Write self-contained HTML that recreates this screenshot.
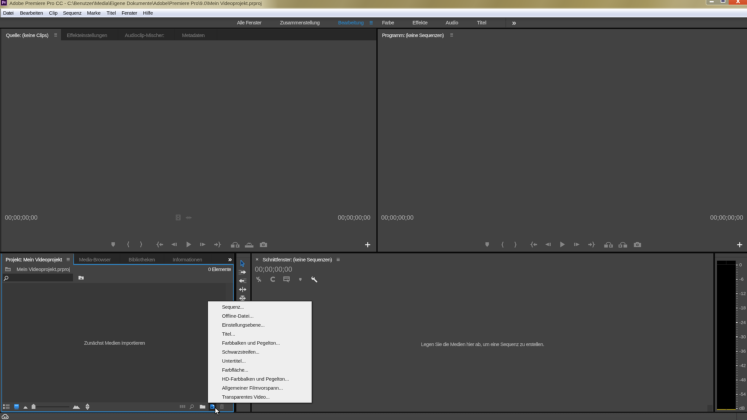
<!DOCTYPE html>
<html lang="de"><head><meta charset="utf-8"><title>Adobe Premiere Pro CC</title>
<style>
html,body{margin:0;padding:0;background:#424242;overflow:hidden;width:747px;height:420px}
#app{position:absolute;left:0;top:0;width:2261px;height:1280px;transform:scale(0.333333);transform-origin:0 0;will-change:transform;background:#424242;font-family:"Liberation Sans",sans-serif;}
#app div,#app span,#app svg{position:absolute;display:block}

.t{white-space:nowrap;-webkit-text-stroke:0.3px currentColor}
.ns{-webkit-text-stroke:0}
#in{left:-20px;top:-20px;width:2301px;height:1320px;overflow:hidden;background:#424242;filter:blur(0.85px);}
#c{left:20px;top:20px;width:2241px;height:1260px}
#vp{position:absolute;left:0;top:0;width:747px;height:420px;overflow:hidden;background:#424242}
</style></head><body><div id="vp"><div id="app"><div id="in"><div id="c">
<div style="left:-18.0px;top:-18.0px;width:2277.0px;height:44.1px;background:linear-gradient(90deg,#a79c6c 0%,#a4986a 30%,#9d9060 40%,#998a58 55%,#9c8c56 68%,#a3935a 80%,#a6975f 86%,#b4a778 91%,#b7ab7e 100%);"></div>
<div style="left:-18.0px;top:-18.0px;width:2277.0px;height:44.1px;background:repeating-linear-gradient(115deg,rgba(255,255,255,0) 0px,rgba(255,255,255,.05) 60px,rgba(0,0,0,.03) 120px,rgba(255,255,255,0) 180px);"></div>
<div style="left:6.0px;top:-18.0px;width:828.0px;height:43.2px;background:linear-gradient(90deg,rgba(234,229,200,0) 0%,rgba(234,229,200,.6) 3%,rgba(236,231,204,.66) 50%,rgba(234,229,200,.58) 94%,rgba(234,229,200,0) 100%);"></div>
<div style="left:-18.0px;top:22.2px;width:2277.0px;height:4.2px;background:linear-gradient(180deg,rgba(225,222,195,.0),rgba(232,231,218,.5));"></div>
<div style="left:2.1px;top:-18.0px;width:18.9px;height:35.4px;background:#2c0c3c;border:1px solid #b070c4;box-sizing:border-box;"></div>
<span class="t " style="left:5.4px;top:1.0px;font-size:12.26px;line-height:14.71px;color:#e2aaf2;font-weight:bold;letter-spacing:-0.32px;">Pr</span>
<span class="t ns" style="left:28.2px;top:0.8px;font-size:15.17px;line-height:18.21px;color:#47422f;letter-spacing:-0.13px;">Adobe Premiere Pro CC - C:\Benutzer\Media\Eigene Dokumente\Adobe\Premiere Pro\9.0\Mein Videoprojekt.prproj</span>
<div style="left:2116.8px;top:-18.0px;width:142.2px;height:33.9px;background:rgba(226,222,196,.55);border-radius:0 0 0 5px;"></div>
<div style="left:2118.6px;top:-18.0px;width:67.2px;height:31.5px;background:linear-gradient(180deg,#a5a186,#98947a);border-radius:0 0 0 4px;"></div>
<div style="left:2185.8px;top:-18.0px;width:73.2px;height:31.5px;background:linear-gradient(180deg,#e0704a,#d24c24);"></div>
<div style="left:2128.8px;top:3.0px;width:12.0px;height:3.6px;background:#f4f4f4;"></div>
<div style="left:2162.4px;top:-18.0px;width:13.2px;height:26.4px;background:#5a587a;border:2.7px solid #f0f0f0;border-top:0;box-sizing:border-box;border-radius:0 0 2px 2px;"></div>
<span class="t " style="left:2208.6px;top:-10.2px;font-size:20.50px;line-height:24.60px;color:#fff;font-weight:bold;">x</span>
<div style="left:-18.0px;top:26.1px;width:2277.0px;height:26.4px;background:linear-gradient(180deg,#ffffff 0%,#f6f8fc 18%,#e0e5f3 42%,#d5dbed 62%,#d6dcee 82%,#e6e9f4 100%);"></div>
<div style="left:-18.0px;top:26.1px;width:20.7px;height:26.4px;background:#8c8c8c;"></div>
<span class="t ns" style="left:9.3px;top:31.1px;font-size:14.71px;line-height:17.65px;color:#000;letter-spacing:-0.69px;">Datei</span>
<span class="t ns" style="left:60.0px;top:31.1px;font-size:14.71px;line-height:17.65px;color:#000;letter-spacing:-0.21px;">Bearbeiten</span>
<span class="t ns" style="left:147.0px;top:31.1px;font-size:14.71px;line-height:17.65px;color:#000;letter-spacing:0.12px;">Clip</span>
<span class="t ns" style="left:189.0px;top:31.1px;font-size:14.71px;line-height:17.65px;color:#000;letter-spacing:-0.36px;">Sequenz</span>
<span class="t ns" style="left:261.0px;top:31.1px;font-size:14.71px;line-height:17.65px;color:#000;letter-spacing:-0.01px;">Marke</span>
<span class="t ns" style="left:319.8px;top:31.1px;font-size:14.71px;line-height:17.65px;color:#000;letter-spacing:0.19px;">Titel</span>
<span class="t ns" style="left:364.8px;top:31.1px;font-size:14.71px;line-height:17.65px;color:#000;letter-spacing:-0.52px;">Fenster</span>
<span class="t ns" style="left:429.0px;top:31.1px;font-size:14.71px;line-height:17.65px;color:#000;letter-spacing:0.12px;">Hilfe</span>
<div style="left:-18.0px;top:52.5px;width:2277.0px;height:30.3px;background:linear-gradient(180deg,#383838,#434343 40%,#434343);"></div>
<div style="left:-18.0px;top:82.8px;width:2277.0px;height:3.9px;background:#0b0b0b;"></div>
<span class="t " style="left:711.0px;top:59.3px;font-size:15.17px;line-height:18.21px;color:#c2c2c2;letter-spacing:-0.67px;">Alle Fenster</span>
<span class="t " style="left:840.0px;top:59.3px;font-size:15.17px;line-height:18.21px;color:#c2c2c2;letter-spacing:-0.59px;">Zusammenstellung</span>
<span class="t " style="left:1014.6px;top:59.3px;font-size:15.17px;line-height:18.21px;color:#2c7fbc;letter-spacing:-0.51px;">Bearbeitung</span>
<span class="t " style="left:1146.0px;top:59.3px;font-size:15.17px;line-height:18.21px;color:#c2c2c2;letter-spacing:-0.73px;">Farbe</span>
<span class="t " style="left:1237.5px;top:59.3px;font-size:15.17px;line-height:18.21px;color:#c2c2c2;letter-spacing:-0.24px;">Effekte</span>
<span class="t " style="left:1337.1px;top:59.3px;font-size:15.17px;line-height:18.21px;color:#c2c2c2;letter-spacing:-0.26px;">Audio</span>
<span class="t " style="left:1431.0px;top:59.3px;font-size:15.17px;line-height:18.21px;color:#c2c2c2;letter-spacing:0.02px;">Titel</span>
<div style="left:1109.4px;top:63.4px;width:8.4px;height:1.8px;background:#2c7fbc;"></div>
<div style="left:1109.4px;top:67.2px;width:8.4px;height:1.8px;background:#2c7fbc;"></div>
<div style="left:1109.4px;top:70.9px;width:8.4px;height:1.8px;background:#2c7fbc;"></div>
<div style="left:1516.5px;top:54.0px;width:1.8px;height:27.6px;background:#2a2a2a;"></div>
<span class="t " style="left:1536.0px;top:54.8px;font-size:22.66px;line-height:27.19px;color:#c8c8c8;font-weight:bold;">»</span>
<div style="left:-18.0px;top:85.8px;width:1146.9px;height:669.6px;background:#424242;"></div>
<div style="left:183.3px;top:86.7px;width:945.6px;height:34.5px;background:#272727;"></div>
<div style="left:-18.0px;top:85.8px;width:21.6px;height:670.2px;background:#2a2a2a;"></div>
<span class="t " style="left:17.7px;top:96.5px;font-size:15.17px;line-height:18.21px;color:#dedede;letter-spacing:-0.43px;">Quelle: (keine Clips)</span>
<div style="left:162.9px;top:101.0px;width:8.4px;height:1.8px;background:#a4a4a4;"></div>
<div style="left:162.9px;top:104.7px;width:8.4px;height:1.8px;background:#a4a4a4;"></div>
<div style="left:162.9px;top:108.5px;width:8.4px;height:1.8px;background:#a4a4a4;"></div>
<span class="t " style="left:200.4px;top:96.5px;font-size:15.17px;line-height:18.21px;color:#737373;letter-spacing:-0.35px;">Effekteinstellungen</span>
<span class="t " style="left:374.4px;top:96.5px;font-size:15.17px;line-height:18.21px;color:#737373;letter-spacing:-0.30px;">Audioclip-Mischer:</span>
<span class="t " style="left:546.0px;top:96.5px;font-size:15.17px;line-height:18.21px;color:#737373;letter-spacing:-0.43px;">Metadaten</span>
<div style="left:353.1px;top:87.0px;width:1.8px;height:33.0px;background:#232323;"></div>
<div style="left:522.3px;top:87.0px;width:1.8px;height:33.0px;background:#232323;"></div>
<div style="left:650.1px;top:87.0px;width:1.8px;height:33.0px;background:#232323;"></div>
<div style="left:1128.9px;top:85.8px;width:3.9px;height:670.2px;background:#0b0b0b;"></div>
<div style="left:-18.0px;top:755.4px;width:2277.0px;height:4.5px;background:#0b0b0b;"></div>
<span class="t " style="left:14.4px;top:641.9px;font-size:18.63px;line-height:22.35px;color:#a6a6a6;">00;00;00;00</span>
<span class="t " style="left:1013.4px;top:642.0px;font-size:18.52px;line-height:22.22px;color:#a6a6a6;">00;00;00;00</span>
<span class="t " style="left:1143.6px;top:642.1px;font-size:18.40px;line-height:22.08px;color:#a6a6a6;">00;00;00;00</span>
<span class="t " style="left:2130.6px;top:641.9px;font-size:18.74px;line-height:22.49px;color:#a6a6a6;">00;00;00;00</span>
<span class="t " style="left:1146.0px;top:96.5px;font-size:15.17px;line-height:18.21px;color:#dedede;letter-spacing:-0.79px;">Programm: (keine Sequenzen)</span>
<div style="left:1350.6px;top:101.0px;width:8.4px;height:1.8px;background:#a4a4a4;"></div>
<div style="left:1350.6px;top:104.7px;width:8.4px;height:1.8px;background:#a4a4a4;"></div>
<div style="left:1350.6px;top:108.5px;width:8.4px;height:1.8px;background:#a4a4a4;"></div>
<div style="left:-18.0px;top:759.9px;width:719.4px;height:475.8px;background:#424242;"></div>
<div style="left:220.8px;top:759.9px;width:480.6px;height:30.9px;background:#272727;"></div>
<div style="left:6.6px;top:849.0px;width:670.2px;height:357.6px;background:#383838;"></div>
<div style="left:676.8px;top:849.0px;width:21.9px;height:357.6px;background:#3c3c3c;"></div>
<div style="left:7.8px;top:820.8px;width:211.2px;height:23.7px;background:#2b2b2b;"></div>
<div style="left:3.9px;top:760.8px;width:2.1px;height:474.9px;background:#2b74ab;"></div>
<div style="left:3.9px;top:1233.0px;width:697.2px;height:2.7px;background:#2c7fbc;"></div>
<div style="left:698.7px;top:791.7px;width:2.4px;height:444.0px;background:#2c7fbc;"></div>
<div style="left:220.8px;top:792.0px;width:480.3px;height:2.7px;background:#2c7fbc;"></div>
<div style="left:219.6px;top:760.5px;width:2.7px;height:34.2px;background:linear-gradient(180deg,#46667a,#2f7fb8 60%,#2f86c8);"></div>
<span class="t " style="left:16.8px;top:769.7px;font-size:15.17px;line-height:18.21px;color:#f0f0f0;letter-spacing:-0.29px;">Projekt: Mein Videoprojekt</span>
<div style="left:200.4px;top:774.2px;width:8.4px;height:1.8px;background:#a4a4a4;"></div>
<div style="left:200.4px;top:777.9px;width:8.4px;height:1.8px;background:#a4a4a4;"></div>
<div style="left:200.4px;top:781.7px;width:8.4px;height:1.8px;background:#a4a4a4;"></div>
<span class="t " style="left:237.0px;top:769.7px;font-size:15.17px;line-height:18.21px;color:#737373;letter-spacing:-0.56px;">Media-Browser</span>
<span class="t " style="left:385.8px;top:769.7px;font-size:15.17px;line-height:18.21px;color:#737373;letter-spacing:-0.29px;">Bibliotheken</span>
<span class="t " style="left:517.8px;top:769.7px;font-size:15.17px;line-height:18.21px;color:#737373;letter-spacing:-0.31px;">Informationen</span>
<div style="left:359.1px;top:762.0px;width:1.8px;height:28.2px;background:#232323;"></div>
<div style="left:491.1px;top:762.0px;width:1.8px;height:28.2px;background:#232323;"></div>
<div style="left:633.6px;top:762.0px;width:1.8px;height:28.2px;background:#232323;"></div>
<span class="t " style="left:684.6px;top:765.3px;font-size:20.50px;line-height:24.60px;color:#e4e4e4;font-weight:bold;">»</span>
<span class="t " style="left:49.8px;top:798.5px;font-size:15.17px;line-height:18.21px;color:#b4b4b4;letter-spacing:-0.17px;">Mein Videoprojekt.prproj</span>
<span class="t " style="left:624.6px;top:798.5px;font-size:15.17px;line-height:18.21px;color:#d2d2d2;letter-spacing:-0.84px;">0 Elemente</span>
<span class="t " style="left:252.3px;top:1019.6px;font-size:15.17px;line-height:18.21px;color:#acacac;letter-spacing:-0.52px;">Zunächst Medien importieren</span>
<div style="left:701.7px;top:759.9px;width:7.2px;height:475.8px;background:#0b0b0b;"></div>
<div style="left:750.6px;top:759.9px;width:4.2px;height:475.8px;background:#0b0b0b;"></div>
<div style="left:2139.9px;top:759.9px;width:5.1px;height:475.8px;background:#0b0b0b;"></div>
<div style="left:708.9px;top:759.9px;width:41.7px;height:475.8px;background:#424242;"></div>
<div style="left:754.8px;top:759.9px;width:1385.1px;height:475.8px;background:#424242;"></div>
<span class="t " style="left:766.8px;top:768.7px;font-size:15.41px;line-height:18.49px;color:#c4c4c4;">×</span>
<span class="t " style="left:787.8px;top:769.7px;font-size:15.17px;line-height:18.21px;color:#dedede;letter-spacing:-0.62px;">Schnittfenster: (keine Sequenzen)</span>
<div style="left:1010.4px;top:773.5px;width:8.4px;height:1.8px;background:#a4a4a4;"></div>
<div style="left:1010.4px;top:777.3px;width:8.4px;height:1.8px;background:#a4a4a4;"></div>
<div style="left:1010.4px;top:781.0px;width:8.4px;height:1.8px;background:#a4a4a4;"></div>
<span class="t " style="left:764.4px;top:796.1px;font-size:21.24px;line-height:25.49px;color:#989898;">00;00;00;00</span>
<span class="t " style="left:1263.0px;top:1024.4px;font-size:15.17px;line-height:18.21px;color:#acacac;letter-spacing:-0.68px;">Legen Sie die Medien hier ab, um eine Sequenz zu erstellen.</span>
<div style="left:2122.2px;top:1215.0px;width:16.2px;height:19.8px;background:#373737;"></div>
<div style="left:2145.0px;top:759.9px;width:114.0px;height:475.8px;background:#424242;"></div>
<div style="left:2145.0px;top:770.7px;width:114.0px;height:1.5px;background:#2e2e2e;"></div>
<div style="left:2151.0px;top:782.1px;width:56.4px;height:447.6px;background:#000;"></div>
<div style="left:2151.0px;top:792.9px;width:56.4px;height:1.5px;background:#2a2a2a;"></div>
<div style="left:2177.7px;top:782.1px;width:1.8px;height:11.1px;background:#2a2a2a;"></div>
<div style="left:2151.0px;top:1226.7px;width:56.4px;height:3.0px;background:#94841a;"></div>
<div style="left:2177.7px;top:1226.4px;width:1.8px;height:3.6px;background:#222;"></div>
<span class="t " style="left:2217.9px;top:787.0px;font-size:13.31px;line-height:15.97px;color:#ababab;letter-spacing:0.40px;">0</span>
<span class="t " style="left:2217.9px;top:830.1px;font-size:13.31px;line-height:15.97px;color:#ababab;letter-spacing:0.99px;">-6</span>
<span class="t " style="left:2217.9px;top:873.2px;font-size:13.31px;line-height:15.97px;color:#ababab;letter-spacing:0.19px;">-12</span>
<span class="t " style="left:2217.9px;top:916.3px;font-size:13.31px;line-height:15.97px;color:#ababab;letter-spacing:0.19px;">-18</span>
<span class="t " style="left:2217.9px;top:959.5px;font-size:13.31px;line-height:15.97px;color:#ababab;letter-spacing:0.19px;">-24</span>
<span class="t " style="left:2217.9px;top:1002.6px;font-size:13.31px;line-height:15.97px;color:#ababab;letter-spacing:0.19px;">-30</span>
<span class="t " style="left:2217.9px;top:1045.7px;font-size:13.31px;line-height:15.97px;color:#ababab;letter-spacing:0.19px;">-36</span>
<span class="t " style="left:2217.9px;top:1088.8px;font-size:13.31px;line-height:15.97px;color:#ababab;letter-spacing:0.19px;">-42</span>
<span class="t " style="left:2217.9px;top:1131.9px;font-size:13.31px;line-height:15.97px;color:#ababab;letter-spacing:0.19px;">-48</span>
<span class="t " style="left:2217.9px;top:1175.0px;font-size:13.31px;line-height:15.97px;color:#ababab;letter-spacing:0.19px;">-54</span>
<span class="t " style="left:2217.9px;top:1216.6px;font-size:13.31px;line-height:15.97px;color:#ababab;letter-spacing:0.26px;">dB</span>
<div style="left:2208.0px;top:793.9px;width:5.4px;height:2.3px;background:#d0d0d0;"></div>
<div style="left:2209.5px;top:801.0px;width:2.7px;height:2.3px;background:#a0a0a0;"></div>
<div style="left:2209.5px;top:808.2px;width:2.7px;height:2.3px;background:#a0a0a0;"></div>
<div style="left:2209.5px;top:815.4px;width:2.7px;height:2.3px;background:#a0a0a0;"></div>
<div style="left:2209.5px;top:822.6px;width:2.7px;height:2.3px;background:#a0a0a0;"></div>
<div style="left:2209.5px;top:829.8px;width:2.7px;height:2.3px;background:#a0a0a0;"></div>
<div style="left:2208.0px;top:837.0px;width:5.4px;height:2.3px;background:#d0d0d0;"></div>
<div style="left:2209.5px;top:844.2px;width:2.7px;height:2.3px;background:#a0a0a0;"></div>
<div style="left:2209.5px;top:851.3px;width:2.7px;height:2.3px;background:#a0a0a0;"></div>
<div style="left:2209.5px;top:858.5px;width:2.7px;height:2.3px;background:#a0a0a0;"></div>
<div style="left:2209.5px;top:865.7px;width:2.7px;height:2.3px;background:#a0a0a0;"></div>
<div style="left:2209.5px;top:872.9px;width:2.7px;height:2.3px;background:#a0a0a0;"></div>
<div style="left:2208.0px;top:880.1px;width:5.4px;height:2.3px;background:#d0d0d0;"></div>
<div style="left:2209.5px;top:887.3px;width:2.7px;height:2.3px;background:#a0a0a0;"></div>
<div style="left:2209.5px;top:894.4px;width:2.7px;height:2.3px;background:#a0a0a0;"></div>
<div style="left:2209.5px;top:901.6px;width:2.7px;height:2.3px;background:#a0a0a0;"></div>
<div style="left:2209.5px;top:908.8px;width:2.7px;height:2.3px;background:#a0a0a0;"></div>
<div style="left:2209.5px;top:916.0px;width:2.7px;height:2.3px;background:#a0a0a0;"></div>
<div style="left:2208.0px;top:923.2px;width:5.4px;height:2.3px;background:#d0d0d0;"></div>
<div style="left:2209.5px;top:930.4px;width:2.7px;height:2.3px;background:#a0a0a0;"></div>
<div style="left:2209.5px;top:937.6px;width:2.7px;height:2.3px;background:#a0a0a0;"></div>
<div style="left:2209.5px;top:944.7px;width:2.7px;height:2.3px;background:#a0a0a0;"></div>
<div style="left:2209.5px;top:951.9px;width:2.7px;height:2.3px;background:#a0a0a0;"></div>
<div style="left:2209.5px;top:959.1px;width:2.7px;height:2.3px;background:#a0a0a0;"></div>
<div style="left:2208.0px;top:966.3px;width:5.4px;height:2.3px;background:#d0d0d0;"></div>
<div style="left:2209.5px;top:973.5px;width:2.7px;height:2.3px;background:#a0a0a0;"></div>
<div style="left:2209.5px;top:980.7px;width:2.7px;height:2.3px;background:#a0a0a0;"></div>
<div style="left:2209.5px;top:987.9px;width:2.7px;height:2.3px;background:#a0a0a0;"></div>
<div style="left:2209.5px;top:995.0px;width:2.7px;height:2.3px;background:#a0a0a0;"></div>
<div style="left:2209.5px;top:1002.2px;width:2.7px;height:2.3px;background:#a0a0a0;"></div>
<div style="left:2208.0px;top:1009.4px;width:5.4px;height:2.3px;background:#d0d0d0;"></div>
<div style="left:2209.5px;top:1016.6px;width:2.7px;height:2.3px;background:#a0a0a0;"></div>
<div style="left:2209.5px;top:1023.8px;width:2.7px;height:2.3px;background:#a0a0a0;"></div>
<div style="left:2209.5px;top:1031.0px;width:2.7px;height:2.3px;background:#a0a0a0;"></div>
<div style="left:2209.5px;top:1038.2px;width:2.7px;height:2.3px;background:#a0a0a0;"></div>
<div style="left:2209.5px;top:1045.3px;width:2.7px;height:2.3px;background:#a0a0a0;"></div>
<div style="left:2208.0px;top:1052.5px;width:5.4px;height:2.3px;background:#d0d0d0;"></div>
<div style="left:2209.5px;top:1059.7px;width:2.7px;height:2.3px;background:#a0a0a0;"></div>
<div style="left:2209.5px;top:1066.9px;width:2.7px;height:2.3px;background:#a0a0a0;"></div>
<div style="left:2209.5px;top:1074.1px;width:2.7px;height:2.3px;background:#a0a0a0;"></div>
<div style="left:2209.5px;top:1081.3px;width:2.7px;height:2.3px;background:#a0a0a0;"></div>
<div style="left:2209.5px;top:1088.4px;width:2.7px;height:2.3px;background:#a0a0a0;"></div>
<div style="left:2208.0px;top:1095.6px;width:5.4px;height:2.3px;background:#d0d0d0;"></div>
<div style="left:2209.5px;top:1102.8px;width:2.7px;height:2.3px;background:#a0a0a0;"></div>
<div style="left:2209.5px;top:1110.0px;width:2.7px;height:2.3px;background:#a0a0a0;"></div>
<div style="left:2209.5px;top:1117.2px;width:2.7px;height:2.3px;background:#a0a0a0;"></div>
<div style="left:2209.5px;top:1124.4px;width:2.7px;height:2.3px;background:#a0a0a0;"></div>
<div style="left:2209.5px;top:1131.6px;width:2.7px;height:2.3px;background:#a0a0a0;"></div>
<div style="left:2208.0px;top:1138.7px;width:5.4px;height:2.3px;background:#d0d0d0;"></div>
<div style="left:2209.5px;top:1145.9px;width:2.7px;height:2.3px;background:#a0a0a0;"></div>
<div style="left:2209.5px;top:1153.1px;width:2.7px;height:2.3px;background:#a0a0a0;"></div>
<div style="left:2209.5px;top:1160.3px;width:2.7px;height:2.3px;background:#a0a0a0;"></div>
<div style="left:2209.5px;top:1167.5px;width:2.7px;height:2.3px;background:#a0a0a0;"></div>
<div style="left:2209.5px;top:1174.7px;width:2.7px;height:2.3px;background:#a0a0a0;"></div>
<div style="left:2208.0px;top:1181.8px;width:5.4px;height:2.3px;background:#d0d0d0;"></div>
<div style="left:2209.5px;top:1189.0px;width:2.7px;height:2.3px;background:#a0a0a0;"></div>
<div style="left:2209.5px;top:1196.2px;width:2.7px;height:2.3px;background:#a0a0a0;"></div>
<div style="left:2209.5px;top:1203.4px;width:2.7px;height:2.3px;background:#a0a0a0;"></div>
<div style="left:2209.5px;top:1210.6px;width:2.7px;height:2.3px;background:#a0a0a0;"></div>
<div style="left:2209.5px;top:1217.8px;width:2.7px;height:2.3px;background:#a0a0a0;"></div>
<div style="left:2208.0px;top:1225.0px;width:5.4px;height:2.3px;background:#d0d0d0;"></div>
<div style="left:-18.0px;top:1236.0px;width:2277.0px;height:42.0px;background:linear-gradient(180deg,#454545,#434343 50%,#3e3e3e);"></div>
<div style="left:-18.0px;top:1235.1px;width:2277.0px;height:3.6px;background:#171717;"></div>
<div style="left:3.9px;top:1233.0px;width:697.2px;height:3.6px;background:#2d82c2;"></div>
<div style="left:2209.2px;top:1239.0px;width:1.5px;height:39.0px;background:#333;"></div>
<svg style="left:331.5px;top:724.5px;color:#868686;overflow:visible;" width="15.0" height="17.4" viewBox="0 0 16 16" preserveAspectRatio="none" fill="currentColor" stroke="none"><path d="M2.5 1.5h11v7.5l-5.5 5.5l-5.5-5.5z"/></svg>
<svg style="left:380.1px;top:724.2px;color:#868686;overflow:visible;" width="9.0" height="18.0" viewBox="0 0 16 16" preserveAspectRatio="none" fill="currentColor" stroke="none"><path d="M12.5 1.5C6 1.5 11 7 4 8C11 9 6 14.5 12.5 14.5" fill="none" stroke="currentColor" stroke-width="3.4"/></svg>
<svg style="left:419.4px;top:724.2px;color:#868686;overflow:visible;" width="9.0" height="18.0" viewBox="0 0 16 16" preserveAspectRatio="none" fill="currentColor" stroke="none"><path d="M3.5 1.5C10 1.5 5 7 12 8C5 9 10 14.5 3.5 14.5" fill="none" stroke="currentColor" stroke-width="3.4"/></svg>
<svg style="left:470.1px;top:723.6px;color:#868686;overflow:visible;" width="19.8" height="19.2" viewBox="0 0 17 16" preserveAspectRatio="none" fill="currentColor" stroke="none"><path d="M5.5 1.5C2.5 1.500 4.500 7 1.500 8C4.500 9 2.500 14.500 5.500 14.500" fill="none" stroke="currentColor" stroke-width="2.2"/><path d="M6.500 8l5-4.500v3h5v3h-5v3z"/></svg>
<svg style="left:512.7px;top:726.0px;color:#868686;overflow:visible;" width="18.6" height="14.4" viewBox="0 0 16 16" preserveAspectRatio="none" fill="currentColor" stroke="none"><path d="M10 2.500v11l-9.500-5.500z"/><rect x="11.800" y="2.500" width="2.800" height="11"/></svg>
<svg style="left:556.5px;top:723.9px;color:#868686;overflow:visible;" width="18.0" height="18.6" viewBox="0 0 16 16" preserveAspectRatio="none" fill="currentColor" stroke="none"><path d="M2.500 0.500l12.500 7.500l-12.500 7.500z"/></svg>
<svg style="left:598.5px;top:726.0px;color:#868686;overflow:visible;" width="18.6" height="14.4" viewBox="0 0 16 16" preserveAspectRatio="none" fill="currentColor" stroke="none"><rect x="1.400" y="2.500" width="2.800" height="11"/><path d="M6 2.500v11l9.500-5.500z"/></svg>
<svg style="left:640.5px;top:723.6px;color:#868686;overflow:visible;" width="21.0" height="19.2" viewBox="0 0 18 16" preserveAspectRatio="none" fill="currentColor" stroke="none"><path d="M12.500 1.500C15.500 1.500 13.500 7 16.500 8C13.500 9 15.500 14.500 12.500 14.500" fill="none" stroke="currentColor" stroke-width="2.2"/><path d="M11.500 8l-5-4.500v3h-5v3h5v3z"/></svg>
<svg style="left:691.5px;top:723.6px;color:#868686;overflow:visible;" width="27.0" height="19.2" viewBox="0 0 20 16" preserveAspectRatio="none" fill="currentColor" stroke="none"><rect x="0.500" y="8" width="8" height="7.500"/><rect x="11.500" y="8" width="8" height="7.500"/><rect x="13.500" y="10" width="3" height="3.500" fill="#424242"/><path d="M5 7C5 1 15 1 15 7" fill="none" stroke="currentColor" stroke-width="1.600"/></svg>
<svg style="left:734.1px;top:723.6px;color:#868686;overflow:visible;" width="27.0" height="19.2" viewBox="0 0 20 16" preserveAspectRatio="none" fill="currentColor" stroke="none"><rect x="0.500" y="10" width="19" height="5.500"/><path d="M5 9C5 3 15 3 15 9" fill="none" stroke="currentColor" stroke-width="1.600"/><path d="M7.500 3.500l2.500 3l2.500-3" fill="none" stroke="currentColor" stroke-width="1.500"/></svg>
<svg style="left:779.4px;top:724.5px;color:#868686;overflow:visible;" width="22.2" height="17.4" viewBox="0 0 18 16" preserveAspectRatio="none" fill="currentColor" stroke="none"><path d="M0.500 3.500h4l1.500-2.500h6l1.500 2.500h4.500v11.500h-17.500z"/><circle cx="9" cy="9" r="3.200" fill="#424242"/><circle cx="9" cy="9" r="1.600"/></svg>
<svg style="left:1453.5px;top:724.8px;color:#868686;overflow:visible;" width="15.0" height="17.4" viewBox="0 0 16 16" preserveAspectRatio="none" fill="currentColor" stroke="none"><path d="M2.5 1.5h11v7.5l-5.5 5.5l-5.5-5.5z"/></svg>
<svg style="left:1503.0px;top:724.5px;color:#868686;overflow:visible;" width="9.0" height="18.0" viewBox="0 0 16 16" preserveAspectRatio="none" fill="currentColor" stroke="none"><path d="M12.5 1.5C6 1.5 11 7 4 8C11 9 6 14.5 12.5 14.5" fill="none" stroke="currentColor" stroke-width="3.4"/></svg>
<svg style="left:1542.0px;top:724.5px;color:#868686;overflow:visible;" width="9.0" height="18.0" viewBox="0 0 16 16" preserveAspectRatio="none" fill="currentColor" stroke="none"><path d="M3.5 1.5C10 1.5 5 7 12 8C5 9 10 14.5 3.5 14.5" fill="none" stroke="currentColor" stroke-width="3.4"/></svg>
<svg style="left:1592.1px;top:723.9px;color:#868686;overflow:visible;" width="19.8" height="19.2" viewBox="0 0 17 16" preserveAspectRatio="none" fill="currentColor" stroke="none"><path d="M5.5 1.5C2.5 1.500 4.500 7 1.500 8C4.500 9 2.500 14.500 5.500 14.500" fill="none" stroke="currentColor" stroke-width="2.2"/><path d="M6.500 8l5-4.500v3h5v3h-5v3z"/></svg>
<svg style="left:1634.7px;top:726.3px;color:#868686;overflow:visible;" width="18.6" height="14.4" viewBox="0 0 16 16" preserveAspectRatio="none" fill="currentColor" stroke="none"><path d="M10 2.500v11l-9.500-5.500z"/><rect x="11.800" y="2.500" width="2.800" height="11"/></svg>
<svg style="left:1678.2px;top:724.2px;color:#868686;overflow:visible;" width="18.0" height="18.6" viewBox="0 0 16 16" preserveAspectRatio="none" fill="currentColor" stroke="none"><path d="M2.500 0.500l12.500 7.500l-12.500 7.500z"/></svg>
<svg style="left:1720.5px;top:726.3px;color:#868686;overflow:visible;" width="18.6" height="14.4" viewBox="0 0 16 16" preserveAspectRatio="none" fill="currentColor" stroke="none"><rect x="1.400" y="2.500" width="2.800" height="11"/><path d="M6 2.500v11l9.500-5.500z"/></svg>
<svg style="left:1762.5px;top:723.9px;color:#868686;overflow:visible;" width="21.0" height="19.2" viewBox="0 0 18 16" preserveAspectRatio="none" fill="currentColor" stroke="none"><path d="M12.500 1.500C15.500 1.500 13.500 7 16.500 8C13.500 9 15.500 14.500 12.500 14.500" fill="none" stroke="currentColor" stroke-width="2.2"/><path d="M11.500 8l-5-4.500v3h-5v3h5v3z"/></svg>
<svg style="left:1812.3px;top:723.9px;color:#868686;overflow:visible;" width="27.0" height="19.2" viewBox="0 0 20 16" preserveAspectRatio="none" fill="currentColor" stroke="none"><rect x="0.500" y="8" width="8" height="7.500"/><rect x="11.500" y="8" width="8" height="7.500"/><rect x="13.500" y="10" width="3" height="3.500" fill="#424242"/><path d="M5 7C5 1 15 1 15 7" fill="none" stroke="currentColor" stroke-width="1.600"/></svg>
<svg style="left:1854.6px;top:723.9px;color:#868686;overflow:visible;" width="27.0" height="19.2" viewBox="0 0 20 16" preserveAspectRatio="none" fill="currentColor" stroke="none"><rect x="0.500" y="8" width="8" height="7.500"/><rect x="11.500" y="8" width="8" height="7.500"/><rect x="2.500" y="10" width="3.500" height="3.500" fill="#424242"/><path d="M5 7C5 1 15 1 15 7" fill="none" stroke="currentColor" stroke-width="1.600"/></svg>
<svg style="left:1901.4px;top:724.8px;color:#868686;overflow:visible;" width="22.2" height="17.4" viewBox="0 0 18 16" preserveAspectRatio="none" fill="currentColor" stroke="none"><path d="M0.500 3.500h4l1.500-2.500h6l1.500 2.500h4.500v11.500h-17.500z"/><circle cx="9" cy="9" r="3.200" fill="#424242"/><circle cx="9" cy="9" r="1.600"/></svg>
<svg style="left:1094.7px;top:726.3px;color:#f2f2f2;" width="16.2" height="16.2" viewBox="0 0 16 16" preserveAspectRatio="none" fill="currentColor" stroke="none"><path d="M6.700 0.500h2.600v6.200h6.200v2.600h-6.200v6.200h-2.600v-6.200h-6.200v-2.600h6.200z"/></svg>
<svg style="left:2210.7px;top:726.3px;color:#f2f2f2;" width="16.2" height="16.2" viewBox="0 0 16 16" preserveAspectRatio="none" fill="currentColor" stroke="none"><path d="M6.700 0.500h2.600v6.200h6.200v2.600h-6.200v6.200h-2.600v-6.200h-6.200v-2.600h6.200z"/></svg>
<svg style="left:526.5px;top:644.1px;color:#6a6a6a;" width="15.0" height="16.8" viewBox="0 0 16 16" preserveAspectRatio="none" fill="currentColor" stroke="none"><rect x="1.500" y="1" width="13" height="14" fill="none" stroke="currentColor" stroke-width="1.600"/><path d="M5 1v14M11 1v14M1.500 5.500h3.500M1.500 10.500h3.500M11 5.500h3.500M11 10.500h3.500M5 8h6" stroke="currentColor" stroke-width="1.200" fill="none"/></svg>
<svg style="left:557.1px;top:647.7px;color:#686868;" width="18.0" height="10.2" viewBox="0 0 20 10" preserveAspectRatio="none" fill="currentColor" stroke="none"><path d="M0 5h20M3.500 2.500v5M7 0.500v9M10.500 2v6M14 0.500v9M17 3v4" stroke="currentColor" stroke-width="1.500" fill="none"/></svg>
<div style="left:708.9px;top:759.9px;width:41.7px;height:11.7px;background:#434343;"></div>
<div style="left:708.9px;top:771.6px;width:41.7px;height:1.5px;background:#383838;"></div>
<svg style="left:720.9px;top:780.3px;color:#2d8ceb;" width="13.2" height="20.4" viewBox="0 0 13 16" preserveAspectRatio="none" fill="currentColor" stroke="none"><path d="M1.500 0.500v13l3.500-3l2.500 5l2.400-1.200l-2.500-4.800h4.600z" fill="#0e2f5c" stroke="#3a8fd6" stroke-width="1.500"/></svg>
<svg style="left:715.2px;top:809.4px;color:#d6d6d6;" width="24.0" height="15.0" viewBox="0 0 20 12" preserveAspectRatio="none" fill="currentColor" stroke="none"><path d="M1 1.500h9M1 6h4M1 10.500h9" fill="none" stroke="currentColor" stroke-width="1.300" stroke-dasharray="2.200 1.600" opacity=".75"/><path d="M6 4.200h7v-3.200l6.500 5l-6.500 5v-3.200h-7z"/></svg>
<svg style="left:715.8px;top:835.2px;color:#d6d6d6;" width="24.0" height="15.0" viewBox="0 0 20 12" preserveAspectRatio="none" fill="currentColor" stroke="none"><path d="M19 1.500h-9M19 6h-4M19 10.500h-9" fill="none" stroke="currentColor" stroke-width="1.300" stroke-dasharray="2.200 1.600" opacity=".75"/><path d="M14 4.200h-7v-3.200l-6.500 5l6.500 5v-3.200h7z"/></svg>
<svg style="left:715.8px;top:860.1px;color:#d6d6d6;" width="24.0" height="16.8" viewBox="0 0 20 14" preserveAspectRatio="none" fill="currentColor" stroke="none"><path d="M0.500 7l5-4v2.800h3v2.400h-3v2.800zM19.500 7l-5-4v2.800h-3v2.400h3v2.800z"/><rect x="9.200" y="0.500" width="1.600" height="13"/></svg>
<svg style="left:717.3px;top:885.6px;color:#d6d6d6;" width="21.0" height="18.0" viewBox="0 0 18 14" preserveAspectRatio="none" fill="currentColor" stroke="none"><path d="M0.500 7l4-3.500v2.500h3.500v2h-3.500v2.500zM17.500 7l-4-3.500v2.500h-3.500v2h3.500v2.500z"/><rect x="7" y="0.500" width="1.500" height="13"/><rect x="9.600" y="0.500" width="1.500" height="13"/><rect x="4" y="1" width="10" height="1.400"/><rect x="4" y="11.600" width="10" height="1.400"/></svg>
<svg style="left:766.8px;top:828.9px;color:#8e8e8e;" width="18.0" height="18.0" viewBox="0 0 16 16" preserveAspectRatio="none" fill="currentColor" stroke="none"><path d="M2 2l12 12M9.500 1l-4.500 7h6l-4.500 7" fill="none" stroke="currentColor" stroke-width="2.400"/><path d="M1.500 5.500h6M8.500 11h6" stroke="currentColor" stroke-width="1.800"/></svg>
<svg style="left:808.8px;top:829.2px;color:#8e8e8e;" width="17.4" height="17.4" viewBox="0 0 16 16" preserveAspectRatio="none" fill="currentColor" stroke="none"><path d="M12.500 3.500A5.500 5.500 0 1 0 12.500 12.500" fill="none" stroke="currentColor" stroke-width="3.800"/><rect x="11" y="1.600" width="3.500" height="3.400"/><rect x="11" y="11" width="3.500" height="3.400"/></svg>
<svg style="left:850.2px;top:828.9px;color:#8e8e8e;" width="19.2" height="18.0" viewBox="0 0 16 16" preserveAspectRatio="none" fill="currentColor" stroke="none"><rect x="1" y="1.500" width="14" height="10" fill="none" stroke="currentColor" stroke-width="2.400"/><path d="M1 5h14" stroke="currentColor" stroke-width="2"/><path d="M9 8l6.500 4l-3 .5l1.500 3l-1.500 .8l-1.500-3l-2 2z"/></svg>
<svg style="left:896.1px;top:832.5px;color:#8e8e8e;" width="10.2" height="11.4" viewBox="0 0 16 16" preserveAspectRatio="none" fill="currentColor" stroke="none"><path d="M2.5 1.5h11v7.5l-5.5 5.5l-5.5-5.5z"/></svg>
<svg style="left:933.0px;top:828.3px;color:#e2e2e2;" width="19.2" height="19.2" viewBox="0 0 16 16" preserveAspectRatio="none" fill="currentColor" stroke="none"><path d="M5.500 0.800a4.400 4.400 0 0 0-4.200 6l0 0a4.400 4.400 0 0 0 5.400 2.400l6 6.300a1.700 1.700 0 0 0 2.500-2.400l-6.200-6a4.400 4.400 0 0 0-.6-4.300l-2.700 2.700l-2-.6l-.5-2l2.700-2.600z"/></svg>
<svg style="left:15.3px;top:800.4px;color:#9a9a9a;" width="17.4" height="15.0" viewBox="0 0 16 16" preserveAspectRatio="none" fill="currentColor" stroke="none"><path d="M0.500 1.500h6l1.500 2.500h7.500v10.500h-15z"/><path d="M2 6.500h12v6h-12z" fill="#5a5a5a"/></svg>
<svg style="left:9.6px;top:826.5px;color:#c4c4c4;" width="16.2" height="16.2" viewBox="0 0 16 16" preserveAspectRatio="none" fill="currentColor" stroke="none"><circle cx="9.500" cy="6" r="4.500" fill="none" stroke="currentColor" stroke-width="2"/><path d="M6.500 9.500l-5 5.500" stroke="currentColor" stroke-width="2.400"/></svg>
<svg style="left:234.6px;top:825.6px;color:#d2d2d2;" width="16.8" height="14.4" viewBox="0 0 16 16" preserveAspectRatio="none" fill="currentColor" stroke="none"><path d="M0.500 2h6l1.500 2h7.500v10h-15z"/><path d="M8 7.500l3 3h-2v2.500h-2v-2.500h-2z" fill="#424242"/></svg>
<div style="left:6.6px;top:1206.6px;width:692.1px;height:27.0px;background:#414141;"></div>
<svg style="left:9.0px;top:1212.0px;color:#c0c0c0;" width="19.8" height="15.6" viewBox="0 0 18 15" preserveAspectRatio="none" fill="currentColor" stroke="none"><rect x="0.500" y="1" width="4" height="5"/><rect x="0.500" y="9" width="4" height="5"/><rect x="7" y="1" width="11" height="5.500" fill="#7a7a7a"/><rect x="7" y="8.500" width="11" height="5.500" fill="#7a7a7a"/></svg>
<svg style="left:42.0px;top:1211.7px;color:#2d8ceb;" width="15.0" height="16.2" viewBox="0 0 16 16" preserveAspectRatio="none" fill="currentColor" stroke="none"><rect x="0.500" y="0.500" width="15" height="11" fill="#2d8ceb"/><rect x="2" y="2" width="12" height="4" fill="#6cc0ff"/><rect x="1.500" y="13" width="13" height="2.500" fill="#2d8ceb"/></svg>
<svg style="left:70.2px;top:1217.4px;color:#c8c8c8;" width="13.2" height="9.0" viewBox="0 0 12 8" preserveAspectRatio="none" fill="currentColor" stroke="none"><path d="M0 8l5-7l2 2.500l1-1l4 5.500z"/></svg>
<div style="left:108.0px;top:1218.9px;width:100.2px;height:2.7px;background:#2b2b2b;"></div>
<svg style="left:94.2px;top:1210.8px;color:#b8b8b8;" width="13.2" height="16.2" viewBox="0 0 14 16" preserveAspectRatio="none" fill="currentColor" stroke="none"><path d="M1 5l6-4.500l6 4.500v10.500h-12z"/></svg>
<svg style="left:218.4px;top:1215.3px;color:#c8c8c8;" width="22.8" height="11.4" viewBox="0 0 20 10" preserveAspectRatio="none" fill="currentColor" stroke="none"><path d="M0 10l6-9.500l3 4l2.500-3l8.500 8.500z"/></svg>
<svg style="left:257.1px;top:1210.8px;color:#d4d4d4;" width="10.8" height="18.0" viewBox="0 0 10 16" preserveAspectRatio="none" fill="currentColor" stroke="none"><path d="M5 0.500l4.500 6h-9zM5 15.500l4.500-6h-9z" fill="#8a8a8a" stroke="currentColor" stroke-width="1.600"/></svg>
<svg style="left:539.4px;top:1214.4px;color:#6e6e6e;" width="18.0" height="10.8" viewBox="0 0 20 10" preserveAspectRatio="none" fill="currentColor" stroke="none"><rect x="0.500" y="1" width="5" height="8"/><rect x="7" y="1" width="5" height="8"/><rect x="13.500" y="1" width="5" height="8"/></svg>
<svg style="left:567.6px;top:1212.9px;color:#8c8c8c;" width="14.4" height="15.0" viewBox="0 0 16 16" preserveAspectRatio="none" fill="currentColor" stroke="none"><circle cx="9.500" cy="6" r="4.500" fill="none" stroke="currentColor" stroke-width="1.800"/><path d="M6.500 9.500l-5 5.500" stroke="currentColor" stroke-width="2.200"/></svg>
<svg style="left:599.1px;top:1212.9px;color:#cfcfcf;" width="17.4" height="14.4" viewBox="0 0 16 16" preserveAspectRatio="none" fill="currentColor" stroke="none"><path d="M0.500 2h6l1.500 2h7.500v10h-15z"/></svg>
<div style="left:625.8px;top:1207.8px;width:22.8px;height:24.6px;background:#252525;"></div>
<svg style="left:630.0px;top:1211.7px;color:#2d8ceb;" width="14.4" height="15.0" viewBox="0 0 16 16" preserveAspectRatio="none" fill="currentColor" stroke="none"><path d="M1 1h9.500l4.500 4.500v9.500h-14z" fill="#2a86e0"/><path d="M9.500 1v5.500h5.500z" fill="#cfe8ff"/><rect x="3" y="8.500" width="7" height="4" fill="#0e3c6c"/></svg>
<svg style="left:659.4px;top:1212.3px;color:#666;" width="13.2" height="15.0" viewBox="0 0 16 16" preserveAspectRatio="none" fill="currentColor" stroke="none"><rect x="2" y="4.500" width="12" height="11" rx="1"/><rect x="0.500" y="1.800" width="15" height="2"/><rect x="5.500" y="0.300" width="5" height="2"/><path d="M5.500 6.500v7M8 6.500v7M10.500 6.500v7" stroke="#434343" stroke-width="1"/></svg>
<svg style="left:4.5px;top:1241.1px;color:#cacaca;" width="21.6" height="16.8" viewBox="0 0 20 15" preserveAspectRatio="none" fill="currentColor" stroke="none"><path d="M4.500 13.500a4 4 0 0 1 0-8a5.500 5.500 0 0 1 10.500 0.500a3.800 3.800 0 0 1 0 7.500z" fill="none" stroke="currentColor" stroke-width="2.200"/><circle cx="7.500" cy="9.500" r="2"/><circle cx="12.500" cy="9.500" r="2"/></svg>
<div style="left:622.8px;top:902.4px;width:313.2px;height:306.6px;background:#262626;box-shadow:2.4px 2.4px 3.6px rgba(0,0,0,.6);"></div>
<div style="left:624.0px;top:903.6px;width:310.8px;height:304.2px;background:#eeeeee;"></div>
<span class="t ns" style="left:666.0px;top:913.1px;font-size:14.71px;line-height:17.65px;color:#1a1a1a;letter-spacing:-0.52px;">Sequenz...</span>
<span class="t ns" style="left:666.0px;top:940.1px;font-size:14.71px;line-height:17.65px;color:#1a1a1a;letter-spacing:0.07px;">Offline-Datei...</span>
<span class="t ns" style="left:666.0px;top:967.1px;font-size:14.71px;line-height:17.65px;color:#1a1a1a;letter-spacing:-0.23px;">Einstellungsebene...</span>
<span class="t ns" style="left:666.0px;top:994.1px;font-size:14.71px;line-height:17.65px;color:#1a1a1a;letter-spacing:0.01px;">Titel...</span>
<span class="t ns" style="left:666.0px;top:1021.1px;font-size:14.71px;line-height:17.65px;color:#1a1a1a;letter-spacing:-0.11px;">Farbbalken und Pegelton...</span>
<span class="t ns" style="left:666.0px;top:1048.1px;font-size:14.71px;line-height:17.65px;color:#1a1a1a;letter-spacing:-0.26px;">Schwarzstreifen...</span>
<span class="t ns" style="left:666.0px;top:1075.1px;font-size:14.71px;line-height:17.65px;color:#1a1a1a;letter-spacing:0.02px;">Untertitel...</span>
<span class="t ns" style="left:666.0px;top:1102.1px;font-size:14.71px;line-height:17.65px;color:#1a1a1a;letter-spacing:-0.24px;">Farbfläche...</span>
<span class="t ns" style="left:666.0px;top:1129.1px;font-size:14.71px;line-height:17.65px;color:#1a1a1a;letter-spacing:-0.07px;">HD-Farbbalken und Pegelton...</span>
<span class="t ns" style="left:666.0px;top:1156.1px;font-size:14.71px;line-height:17.65px;color:#1a1a1a;letter-spacing:0.02px;">Allgemeiner Filmvorspann...</span>
<span class="t ns" style="left:666.0px;top:1183.1px;font-size:14.71px;line-height:17.65px;color:#1a1a1a;letter-spacing:-0.23px;">Transparentes Video...</span>
<svg style="left:643.8px;top:1221.6px;color:#fff;" width="16.2" height="24.6" viewBox="0 0 12 18" preserveAspectRatio="none" fill="currentColor" stroke="none"><path d="M1 0.500v14l3.500-3.200l2.600 5.700l2.200-1l-2.600-5.500h4.800z" fill="#fff" stroke="#000" stroke-width="1"/></svg>
</div></div></div></div></body></html>
